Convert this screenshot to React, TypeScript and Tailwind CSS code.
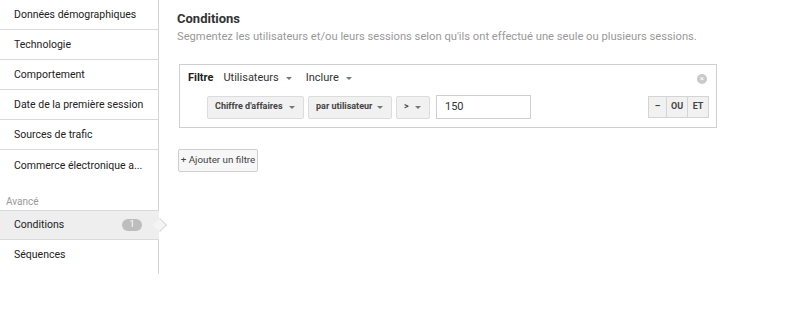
const ITEMS = [
  "Données démographiques",
  "Technologie",
  "Comportement",
  "Date de la première session",
  "Sources de trafic",
];

function Caret() {
  return <span className="inline-block w-0 h-0 border-l-[3px] border-r-[3px] border-t-[3px] border-l-transparent border-r-transparent border-t-[#777]" />;
}

function SelectBtn({ label, width }: { label: string; width: string }) {
  return (
    <div
      className={`${width} h-[23px] flex items-center justify-between pl-[7px] pr-[8px] bg-[#f1f1f1] border border-[#dcdcdc] rounded-[2px] text-[9px] font-bold text-[#444]`}
    >
      <span>{label}</span>
      <Caret />
    </div>
  );
}

export default function App() {
  return (
    <div className="w-[788px] h-[325px] bg-white flex font-['Roboto','Liberation_Sans',sans-serif] text-[11px] text-[#222]">
      {/* Sidebar */}
      <div className="w-[159px] h-[274px] border-r border-[#d4d4d4] flex flex-col shrink-0 text-[10.5px]">
        {ITEMS.map((t) => (
          <div key={t} className="h-[30px] flex items-center pl-[14px] pt-[1px] border-b border-[#d9d9d9]">
            {t}
          </div>
        ))}
        <div className="h-[30px] flex items-center pl-[14px] pt-[1px]">Commerce électronique a...</div>
        <div className="h-[30px] flex items-end pb-[1px] pl-[6px] text-[10px] text-[#999]">Avancé</div>
        <div className="relative h-[30px] flex items-center justify-between pl-[14px] pr-[17px] bg-[#eeeeee] border-y border-[#d9d9d9] mr-[-1px]">
          <span>Conditions</span>
          <span className="w-[20px] h-[12px] rounded-full bg-[#bdbdbd] text-white text-[9px] flex items-center justify-center">1</span>
          <span className="absolute right-[-6px] top-[9px] w-[10px] h-[10px] rotate-45 bg-[#f4f4f4] border-t border-r border-[#d9d9d9]" />
        </div>
        <div className="h-[30px] flex items-center pl-[14px]">Séquences</div>
      </div>

      {/* Main */}
      <div className="flex-1 pl-[18px] pt-[11px]">
        <div className="text-[13px] font-bold text-[#333] leading-[16px]">Conditions</div>
        <div className="text-[11.2px] text-[#999] leading-[14px] mt-[3px]">
          Segmentez les utilisateurs et/ou leurs sessions selon qu'ils ont effectué une seule ou plusieurs sessions.
        </div>

        <div className="mt-[20px] ml-[2px] w-[538px] h-[64px] border border-[#cfcfcf] flex flex-col pl-[8px] pr-[8px]">
          <div className="h-[26px] flex items-center gap-[8px] pt-[1px]">
            <span className="font-bold text-[#222]">Filtre</span>
            <span className="flex items-center gap-[7px] ml-[2px] text-[#333]">Utilisateurs <Caret /></span>
            <span className="flex items-center gap-[7px] ml-[6px] text-[#333]">Inclure <Caret /></span>
            <span className="ml-auto w-[10px] h-[10px] rounded-full bg-[#c9c9c9] text-white text-[8px] leading-[10px] flex items-center justify-center mr-[1px]">×</span>
          </div>
          <div className="flex items-center mt-[4px]">
            <div className="flex items-center gap-[4px] ml-[19px]">
              <SelectBtn label="Chiffre d'affaires" width="w-[97px]" />
              <SelectBtn label="par utilisateur" width="w-[84px]" />
              <SelectBtn label=">" width="w-[34px]" />
              <div className="ml-[2px] w-[95px] h-[24px] border border-[#cfcfcf] flex items-center pl-[8px] text-[11px] text-[#333]">150</div>
            </div>
            <div className="ml-auto flex h-[22px] border border-[#d4d4d4] text-[9px] font-bold text-[#444] mr-[-1px]">
              <span className="w-[18px] flex items-center justify-center bg-[#f1f1f1] border-r border-[#d4d4d4]">–</span>
              <span className="w-[21px] flex items-center justify-center bg-[#f1f1f1] border-r border-[#d4d4d4]">OU</span>
              <span className="w-[20px] flex items-center justify-center bg-[#f1f1f1]">ET</span>
            </div>
          </div>
        </div>

        <div className="mt-[21px] ml-[1px] w-[80px] h-[23px] border border-[#cfcfcf] rounded-[2px] bg-[#f7f7f7] flex items-center justify-center text-[9.8px] text-[#444]">
          + Ajouter un filtre
        </div>
      </div>
    </div>
  );
}
